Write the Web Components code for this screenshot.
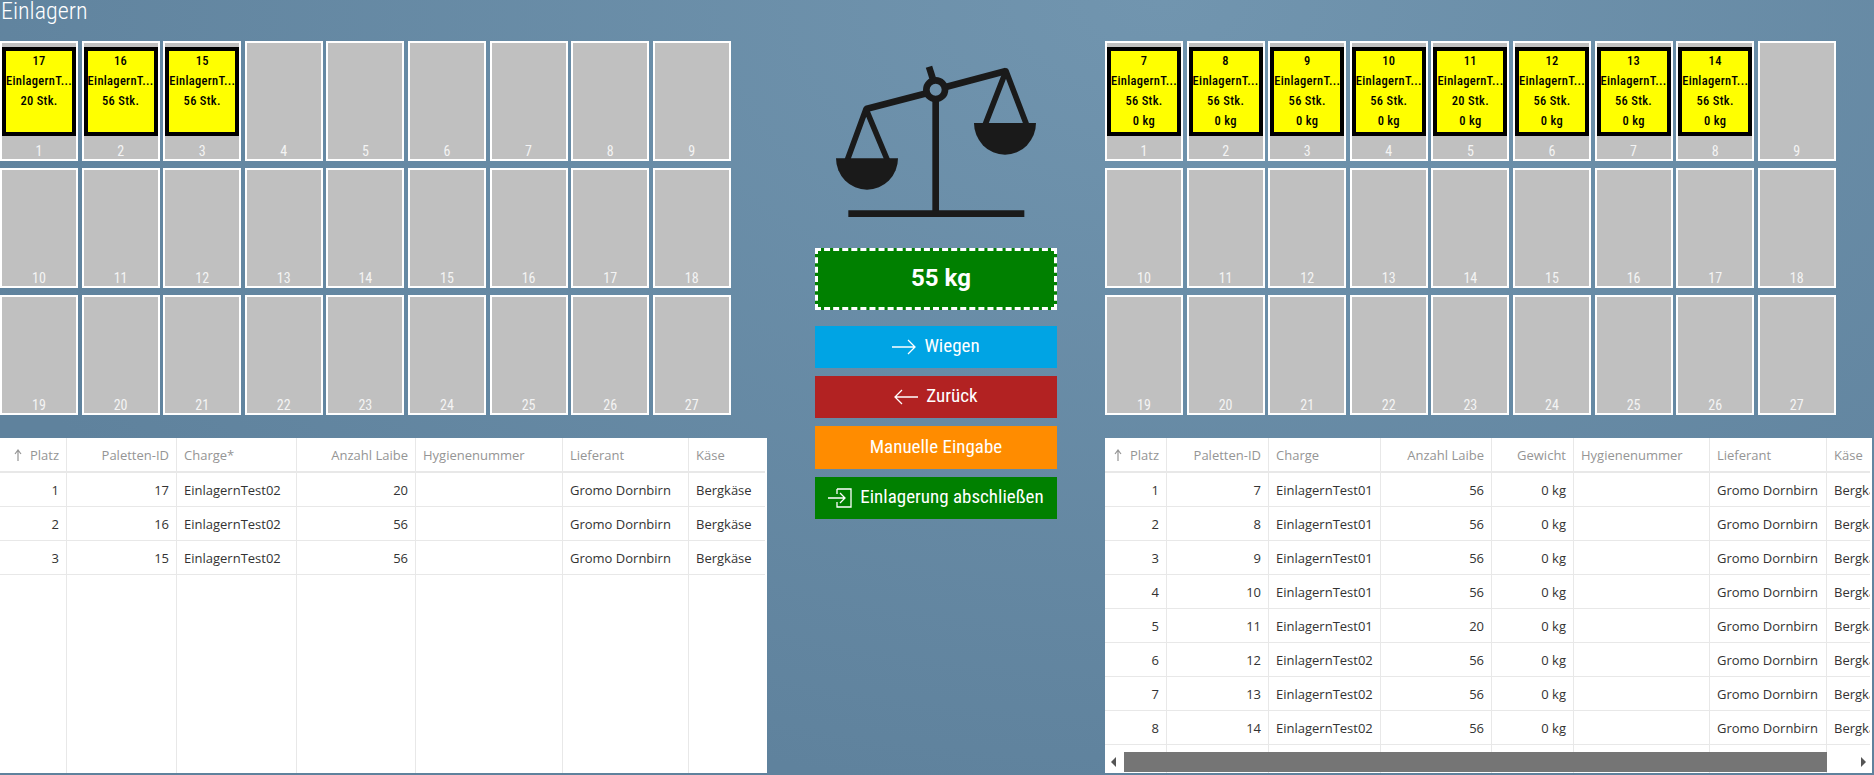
<!DOCTYPE html>
<html lang="de">
<head>
<meta charset="UTF-8">
<title>Einlagern</title>
<style>
  html, body { margin: 0; height: 100%; overflow: hidden; }
  body {
    background: radial-gradient(ellipse 1300px 800px at 62% 0, #7195af, #5f829d);
    font-family: Roboto, "Liberation Sans", sans-serif;
  }
</style>
</head>
<body>
<einlagern-page></einlagern-page>

<script>
  const define = (name, css, html, render) => {
    class El extends HTMLElement {
      constructor() {
        super();
        this.attachShadow({mode: "open"});
        this.shadowRoot.innerHTML = `<style>${css}</style>${html}`;
      }
      connectedCallback() {
        if (render) render.call(this);
      }
    }
    customElements.define(name, El);
  };

  // a loaded palette inside a slot
  define("pallet-card", `
    :host { display: block; box-sizing: border-box; width: 74px; height: 89px; margin-top: 4px;
      border: 4px solid #000; background: #ff0; color: #000; font: 500 12.5px/20px Roboto, sans-serif; font-stretch: 75%;
      letter-spacing: .3px; text-align: center; }
    ::slotted(div) { white-space: nowrap; }
  `, `<slot></slot>`);

  define("slot-tile", `
    :host { display: flex; flex-direction: column; box-sizing: border-box; height: 120px;
      border: 2px solid #fff; background: #c0c0c0; }
    .num { margin-top: auto; height: 15px; text-align: center;
      color: #f4f4f4; font: 400 14px/15px Roboto, sans-serif; font-stretch: 75%; }
  `, `<slot></slot><div class="num"></div>`, function () {
    this.shadowRoot.querySelector(".num").textContent = this.getAttribute("num");
  });

  define("slot-grid", `
    :host { display: grid; grid-template-columns: repeat(9, 78px); column-gap: 3.6px; row-gap: 7px; width: 731px; }
  `, `<slot></slot>`, function () {
    const pallets = JSON.parse(this.getAttribute("pallets"));
    for (let i = 1; i <= 27; i++) {
      const tile = document.createElement("slot-tile");
      tile.setAttribute("num", i);
      const p = pallets[i - 1];
      if (p) {
        const card = document.createElement("pallet-card");
        p.forEach(line => {
          const d = document.createElement("div");
          d.textContent = line;
          card.appendChild(d);
        });
        tile.appendChild(card);
      }
      this.appendChild(tile);
    }
  });

  define("data-grid", `
    :host { display: block; position: relative; height: 335px; width: 767px; background: #fff;
      font: 13px "Open Sans", sans-serif; color: #333; }
    .clip { width: 765px; height: 335px; overflow: hidden; }
    table { border-collapse: separate; border-spacing: 0; table-layout: fixed; height: 335px; }
    th, td { box-sizing: border-box; padding: 0 7px; border-right: 1px solid #e8e8e8; border-bottom: 1px solid #e8e8e8;
      overflow: hidden; white-space: nowrap; height: 34px; font-weight: 400; text-align: left; }
    td:last-child, th:last-child { border-right: 0; }
    th { height: 35px; border-bottom-width: 2px; color: #959595; }
    .r { text-align: right; }
    tr.fill td { height: auto; border-bottom: 0; }
    th svg { vertical-align: -1px; margin-right: 8px; }
  `, `<div class="clip"><table><colgroup></colgroup><thead><tr></tr></thead><tbody></tbody></table></div><slot></slot>`, function () {
    const root = this.shadowRoot;
    const cols = JSON.parse(this.getAttribute("cols"));
    const rows = JSON.parse(this.getAttribute("rows"));
    root.querySelector("table").style.width = cols.reduce((a, c) => a + c.w, 0) + "px";
    const arrow = `<svg width="8" height="12" viewBox="0 0 8 12"><path d="M4 12V2M1 5l3-4 3 4" fill="none" stroke="#959595" stroke-width="1.2"/></svg>`;
    root.querySelector("colgroup").innerHTML = cols.map(c => `<col style="width:${c.w}px">`).join("");
    root.querySelector("thead tr").innerHTML = cols.map((c, i) =>
      `<th class="${c.r ? "r" : ""}">${i === 0 ? arrow : ""}${c.t}</th>`).join("");
    root.querySelector("tbody").innerHTML = rows.map(r =>
      `<tr>${r.map((v, i) => `<td class="${cols[i].r ? "r" : ""}">${v}</td>`).join("")}</tr>`).join("") +
      `<tr class="fill">${cols.map(() => "<td></td>").join("")}</tr>`;
  });

  define("h-scrollbar", `
    :host { display: block; position: absolute; left: 0; right: 0; bottom: 1px; height: 20px; background: #fff; }
    .thumb { position: absolute; left: 19px; top: 0; bottom: 0; width: 703px; background: #757575; }
    svg { position: absolute; top: 5px; }
  `, `<svg style="left:6px" width="6" height="10"><path d="M5 0v10L0 5z" fill="#555"/></svg>
      <div class="thumb"></div>
      <svg style="right:6px" width="6" height="10"><path d="M1 0v10l5-5z" fill="#555"/></svg>`);

  define("action-button", `
    :host { display: flex; align-items: center; justify-content: center; gap: 8px; height: 42px;
      color: #fff; font: 400 19px Roboto, sans-serif; font-stretch: 75%; }
    :host([tall]) { height: 43px; }
    ::slotted(svg) { flex: none; }
    ::slotted(span) { padding-bottom: 3px; }
  `, `<slot></slot>`);

  define("weight-box", `
    :host { display: flex; align-items: center; justify-content: center; box-sizing: border-box; height: 62px;
      padding: 0 0 2px 10px; background: #008000; border: 3px dashed #fff; color: #fff; font: 700 24px Roboto, sans-serif; }
  `, `<slot></slot>`);

  define("scale-icon", `
    :host { display: block; height: 160px; }
    svg { display: block; margin: 0 auto; }
  `, `<svg width="300" height="160" viewBox="18 60 900 480">
    <g fill="none" stroke="#1a1a1a" stroke-width="20" stroke-linejoin="round">
      <path d="M467 170V515"/>
      <path d="M258 207L440 160M500 140L678 93"/>
      <path d="M447 80L458 115"/>
      <circle cx="467" cy="149" r="28"/>
      <path d="M202 360L258 207L322 360" stroke-width="17"/>
      <path d="M615 255L678 93L740 255" stroke-width="17"/>
    </g>
    <path d="M205 511H733V531H205z" fill="#1a1a1a"/>
    <path d="M168 355H354A93 94 0 0 1 168 355z" fill="#1a1a1a"/>
    <path d="M582 249H768A93 95 0 0 1 582 249z" fill="#1a1a1a"/>
  </svg>`);

  const arrowRight = `<svg width="24" height="16" viewBox="0 0 24 16"><path d="M0 8H23M16 1l7 7-7 7" fill="none" stroke="#fff" stroke-width="1.3"/></svg>`;
  const arrowLeft = `<svg width="24" height="16" viewBox="0 0 24 16"><path d="M24 8H1M8 1L1 8l7 7" fill="none" stroke="#fff" stroke-width="1.3"/></svg>`;
  const exitIcon = `<svg width="24" height="20" viewBox="0 0 24 20"><path d="M9 1H23V19H9V14M9 6V1M0 10H17M12 5l5 5-5 5" fill="none" stroke="#fff" stroke-width="1.3"/></svg>`;

  const leftPallets = [
    ["17", "EinlagernT...", "20 Stk."],
    ["16", "EinlagernT...", "56 Stk."],
    ["15", "EinlagernT...", "56 Stk."]
  ];
  const rightData = [
    [7, "01", 56], [8, "01", 56], [9, "01", 56], [10, "01", 56],
    [11, "01", 20], [12, "02", 56], [13, "02", 56], [14, "02", 56]
  ];
  const rightPallets = rightData.map(d => [d[0], "EinlagernT...", d[2] + " Stk.", "0 kg"]);

  const leftCols = [
    {t: "Platz", w: 67, r: 1}, {t: "Paletten-ID", w: 110, r: 1}, {t: "Charge*", w: 120},
    {t: "Anzahl Laibe", w: 119, r: 1}, {t: "Hygienenummer", w: 147}, {t: "Lieferant", w: 126}, {t: "Käse", w: 78}
  ];
  const leftRows = [
    [1, 17, "EinlagernTest02", 20, "", "Gromo Dornbirn", "Bergkäse"],
    [2, 16, "EinlagernTest02", 56, "", "Gromo Dornbirn", "Bergkäse"],
    [3, 15, "EinlagernTest02", 56, "", "Gromo Dornbirn", "Bergkäse"]
  ];
  const rightCols = [
    {t: "Platz", w: 62, r: 1}, {t: "Paletten-ID", w: 102, r: 1}, {t: "Charge", w: 112},
    {t: "Anzahl Laibe", w: 111, r: 1}, {t: "Gewicht", w: 82, r: 1}, {t: "Hygienenummer", w: 136},
    {t: "Lieferant", w: 117}, {t: "Käse", w: 90}
  ];
  const rightRows = rightData.map((d, i) =>
    [i + 1, d[0], "EinlagernTest" + d[1], d[2], "0 kg", "", "Gromo Dornbirn", "Bergkäse"]);

  const attr = v => JSON.stringify(v);

  define("einlagern-page", `
    :host { display: block; height: 775px; overflow: hidden; color: #fff; }
    h1 { margin: 0; height: 41px; padding-left: 1px; font: 300 24px/22px Roboto, sans-serif; font-stretch: 75%; color: #fff; }
    .main { display: grid; grid-template-columns: 767px 338px 769px; }
    .side { display: flex; flex-direction: column; gap: 23px; }
    .mid { display: flex; flex-direction: column; padding-top: 19px; }
    .actions { display: flex; flex-direction: column; gap: 8px; width: 242px; margin: 28px auto 0; }
    weight-box { margin-bottom: 8px; }
  `, `<h1>Einlagern</h1>
    <div class="main">
      <div class="side">
        <slot-grid pallets='${attr(leftPallets)}'></slot-grid>
        <data-grid cols='${attr(leftCols)}' rows='${attr(leftRows)}'></data-grid>
      </div>
      <div class="mid">
        <scale-icon></scale-icon>
        <div class="actions">
          <weight-box>55 kg</weight-box>
          <action-button style="background:#00a4e4">${arrowRight}<span>Wiegen</span></action-button>
          <action-button style="background:#b22222">${arrowLeft}<span>Zurück</span></action-button>
          <action-button tall style="background:#ff8c00"><span>Manuelle Eingabe</span></action-button>
          <action-button style="background:#008000">${exitIcon}<span>Einlagerung abschließen</span></action-button>
        </div>
      </div>
      <div class="side">
        <slot-grid pallets='${attr(rightPallets)}'></slot-grid>
        <data-grid cols='${attr(rightCols)}' rows='${attr(rightRows)}'><h-scrollbar></h-scrollbar></data-grid>
      </div>
    </div>`);
</script>
</body>
</html>
